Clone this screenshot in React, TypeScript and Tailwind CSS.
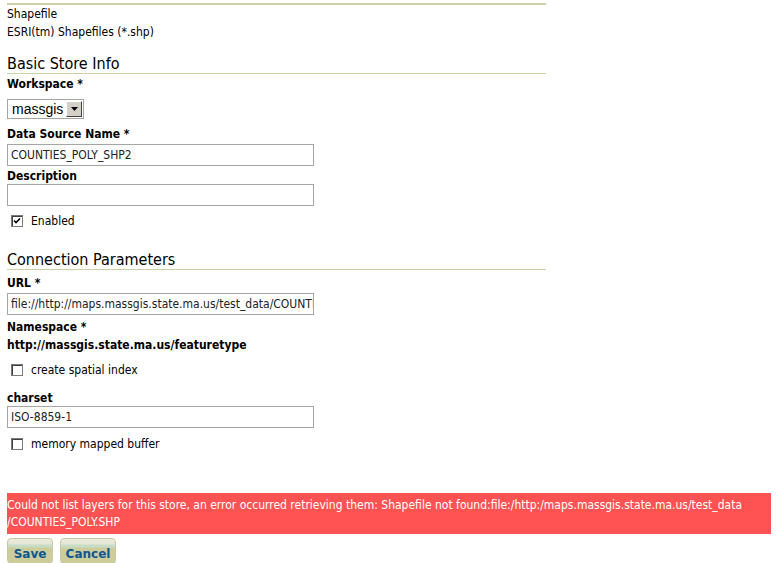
import React from "react";

const font = "font-['DejaVu_Sans_Condensed','DejaVu_Sans',sans-serif]";

function Label({ children }: { children: React.ReactNode }) {
  return <div className="text-[12px] font-bold leading-[16px] text-black">{children}</div>;
}

function TextField({ value }: { value?: string }) {
  return (
    <div className="h-[22px] w-[307px] overflow-hidden whitespace-nowrap border border-[#a5a5a5] bg-white px-[3px] text-[12px] leading-[20px] text-[#222]">
      {value ?? ""}
    </div>
  );
}

function Check({ checked, label }: { checked?: boolean; label: string }) {
  return (
    <div className="flex items-center gap-[8px] pl-[4px] text-[12px] leading-[16px]">
      <span className="flex h-[12px] w-[12px] items-center justify-center border border-[#7a7a7a] bg-white shadow-[inset_1px_1px_0_#404040]">
        {checked && (
          <svg width="8" height="8" viewBox="0 0 8 8">
            <path d="M1 3.5 L3 5.5 L7 1.5" stroke="#000" strokeWidth="1.6" fill="none" />
          </svg>
        )}
      </span>
      <span>{label}</span>
    </div>
  );
}

function FormButton({ children, width }: { children: React.ReactNode; width: string }) {
  return (
    <button
      type="button"
      className={`block h-[26px] ${width} rounded-[4px] border border-[#c9c9a3] bg-[linear-gradient(#ececdf_0,#e6e6d6_5px,#c6dcc6_6px,#c6dcc6_8px,#cdcd9c_9px,#cdcd9c_100%)] pt-[6px] text-center text-[12px] font-bold leading-[16px] text-[#0b5690] font-['DejaVu_Sans',sans-serif]`}
    >
      {children}
    </button>
  );
}

export default function App() {
  return (
    <div className={`h-[563px] w-[779px] overflow-hidden bg-white text-black ${font}`}>
      <div className="pl-[7px]">
        <div className="w-[539px] pt-[3px]">
          <div className="h-[2px] bg-[#cdd0a6]" />
          <div className="text-[12px] leading-[18px]">Shapefile</div>
          <div className="text-[12px] leading-[18px]">ESRI(tm) Shapefiles (*.shp)</div>

          <div className="mt-[14px] text-[16px] leading-[18px]">Basic Store Info</div>
          <div className="h-[1px] bg-[#cdd0a6]" />
          <div className="mt-[2px]">
            <Label>Workspace *</Label>
          </div>
          <div className="mt-[7px] flex h-[20px] w-[77px] items-center border border-[#a5a5a5] bg-white">
            <span className="flex-1 pl-[4px] text-[14px] leading-[18px] font-['Liberation_Sans',sans-serif]">massgis</span>
            <span className="mr-[1px] flex h-[16px] w-[16px] items-center justify-center border border-t-white border-l-white border-r-[#404040] border-b-[#404040] bg-[#d4d0c8]">
              <svg width="7" height="4" viewBox="0 0 7 4">
                <path d="M0 0 H7 L3.5 4 Z" fill="#000" />
              </svg>
            </span>
          </div>

          <div className="mt-[7px]">
            <Label>Data Source Name *</Label>
          </div>
          <div className="mt-[2px]">
            <TextField value="COUNTIES_POLY_SHP2" />
          </div>
          <div className="mt-[2px]">
            <Label>Description</Label>
          </div>
          <div>
            <TextField />
          </div>
          <div className="mt-[7px]">
            <Check checked label="Enabled" />
          </div>

          <div className="mt-[22px] text-[16px] leading-[18px]">Connection Parameters</div>
          <div className="h-[1px] bg-[#cdd0a6]" />
          <div className="mt-[5px]">
            <Label>URL *</Label>
          </div>
          <div className="mt-[2px]">
            <TextField value="file://http://maps.massgis.state.ma.us/test_data/COUNTIES_POLY.SHP" />
          </div>
          <div className="mt-[4px]">
            <Label>Namespace *</Label>
          </div>
          <div className="mt-[2px]">
            <Label>http://massgis.state.ma.us/featuretype</Label>
          </div>
          <div className="mt-[9px]">
            <Check label="create spatial index" />
          </div>
          <div className="mt-[12px]">
            <Label>charset</Label>
          </div>
          <div>
            <TextField value="ISO-8859-1" />
          </div>
          <div className="mt-[8px]">
            <Check label="memory mapped buffer" />
          </div>
        </div>

        <div className="mt-[41px] h-[41px] w-[764px] bg-[#ff5252] pt-[4px] text-[12px] leading-[17px] text-white">
          Could not list layers for this store, an error occurred retrieving them: Shapefile not found:file:/http:/maps.massgis.state.ma.us/test_data
          <br />
          /COUNTIES_POLY.SHP
        </div>

        <div className="mt-[4px] flex gap-[7px]">
          <FormButton width="w-[46px]">Save</FormButton>
          <FormButton width="w-[56px]">Cancel</FormButton>
        </div>
      </div>
    </div>
  );
}
